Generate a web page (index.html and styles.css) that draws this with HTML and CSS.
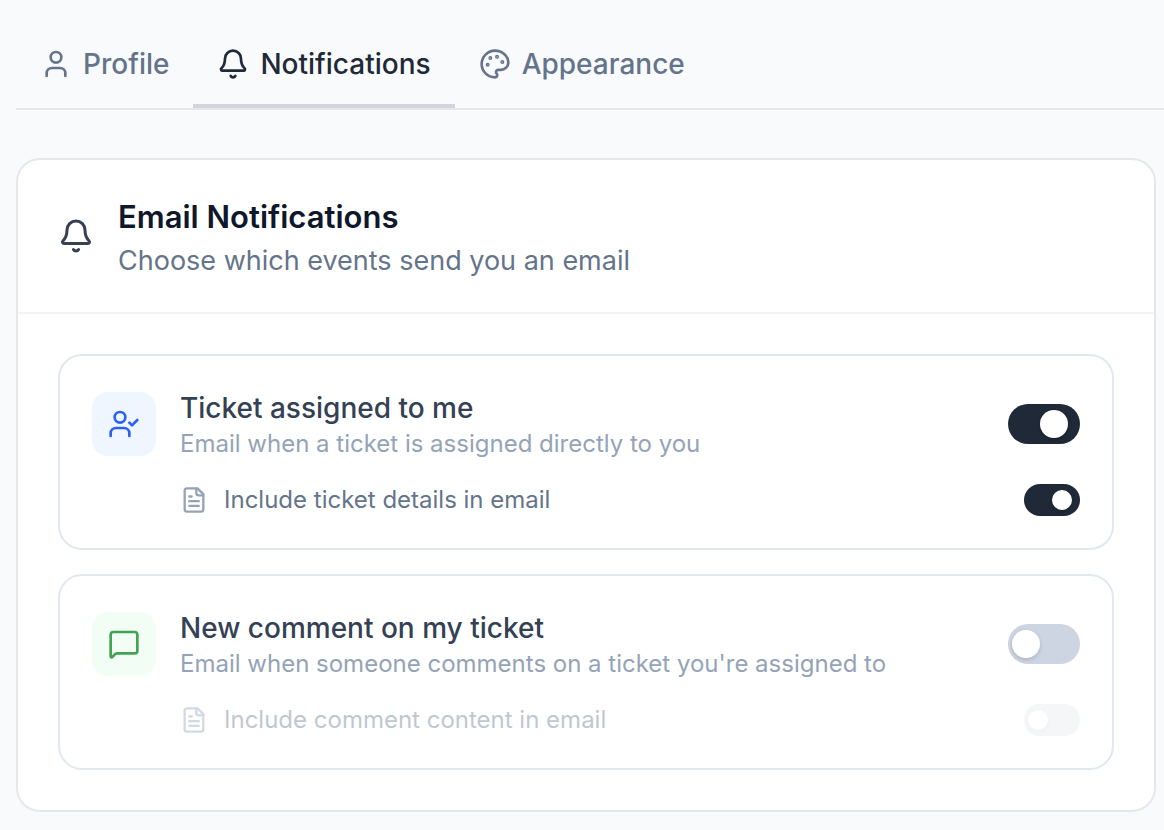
FILE: index.html
```html
<!DOCTYPE html>
<html lang="en">
<head>
  <meta charset="UTF-8">
  <meta name="viewport" content="width=device-width, initial-scale=1.0">
  <title>Notification Settings</title>
  <link rel="stylesheet" href="styles.css">
</head>
<body>

<nav class="tabs">
  <button type="button" class="tab">
    <svg class="icon" viewBox="0 0 24 24"><path d="M19 21v-2a4 4 0 0 0-4-4H9a4 4 0 0 0-4 4v2"/><circle cx="12" cy="7" r="4"/></svg>
    Profile
  </button>
  <button type="button" class="tab active">
    <svg class="icon" viewBox="0 0 24 24"><path d="M10.268 21a2 2 0 0 0 3.464 0"/><path d="M3.262 15.326A1 1 0 0 0 4 17h16a1 1 0 0 0 .74-1.673C19.41 13.956 18 12.499 18 8A6 6 0 0 0 6 8c0 4.499-1.411 5.956-2.738 7.326"/></svg>
    Notifications
  </button>
  <button type="button" class="tab">
    <svg class="icon" viewBox="0 0 24 24"><path d="M12 2C6.5 2 2 6.5 2 12s4.5 10 10 10c.926 0 1.648-.746 1.648-1.688 0-.437-.18-.835-.437-1.125-.29-.289-.438-.652-.438-1.125a1.64 1.64 0 0 1 1.668-1.668h1.996c3.051 0 5.555-2.503 5.555-5.554C21.965 6.012 17.461 2 12 2z"/><circle class="dot" cx="13.5" cy="6.5" r=".5"/><circle class="dot" cx="17.5" cy="10.5" r=".5"/><circle class="dot" cx="6.5" cy="12.5" r=".5"/><circle class="dot" cx="8.5" cy="7.5" r=".5"/></svg>
    Appearance
  </button>
</nav>

<section class="card">
  <header class="card-header">
    <svg class="icon icon-lg" viewBox="0 0 24 24"><path d="M10.268 21a2 2 0 0 0 3.464 0"/><path d="M3.262 15.326A1 1 0 0 0 4 17h16a1 1 0 0 0 .74-1.673C19.41 13.956 18 12.499 18 8A6 6 0 0 0 6 8c0 4.499-1.411 5.956-2.738 7.326"/></svg>
    <div>
      <h2>Email Notifications</h2>
      <p>Choose which events send you an email</p>
    </div>
  </header>

  <form class="card-body">
    <div class="setting">
      <div class="setting-row">
        <span class="badge badge-blue">
          <svg class="icon" viewBox="0 0 24 24"><path d="m16 11 2 2 4-4"/><path d="M16 21v-2a4 4 0 0 0-4-4H6a4 4 0 0 0-4 4v2"/><circle cx="9" cy="7" r="4"/></svg>
        </span>
        <div class="setting-text">
          <label for="assigned">Ticket assigned to me</label>
          <p>Email when a ticket is assigned directly to you</p>
        </div>
        <input type="checkbox" role="switch" class="toggle" id="assigned" checked>
      </div>
      <div class="sub-row">
        <svg class="icon icon-sm" viewBox="0 0 24 24"><path d="M15 2H6a2 2 0 0 0-2 2v16a2 2 0 0 0 2 2h12a2 2 0 0 0 2-2V7Z"/><path d="M14 2v4a2 2 0 0 0 2 2h4"/><path d="M10 9H8"/><path d="M16 13H8"/><path d="M16 17H8"/></svg>
        <label for="assignedDetails">Include ticket details in email</label>
        <input type="checkbox" role="switch" class="toggle toggle-sm" id="assignedDetails" checked>
      </div>
    </div>

    <div class="setting">
      <div class="setting-row">
        <span class="badge badge-green">
          <svg class="icon" viewBox="0 0 24 24"><path d="M22 17a2 2 0 0 1-2 2H6.828a2 2 0 0 0-1.414.586l-2.202 2.202A.71.71 0 0 1 2 21.286V5a2 2 0 0 1 2-2h16a2 2 0 0 1 2 2z"/></svg>
        </span>
        <div class="setting-text">
          <label for="comment">New comment on my ticket</label>
          <p>Email when someone comments on a ticket you're assigned to</p>
        </div>
        <input type="checkbox" role="switch" class="toggle" id="comment">
      </div>
      <div class="sub-row disabled">
        <svg class="icon icon-sm" viewBox="0 0 24 24"><path d="M15 2H6a2 2 0 0 0-2 2v16a2 2 0 0 0 2 2h12a2 2 0 0 0 2-2V7Z"/><path d="M14 2v4a2 2 0 0 0 2 2h4"/><path d="M10 9H8"/><path d="M16 13H8"/><path d="M16 17H8"/></svg>
        <label for="commentContent">Include comment content in email</label>
        <input type="checkbox" role="switch" class="toggle toggle-sm" id="commentContent" disabled>
      </div>
    </div>
  </form>
</section>

</body>
</html>
```

FILE: styles.css
```css
* { box-sizing: border-box; }
body {
  margin: 0;
  padding: 20px 8px 18px 16px;
  background: #f9fafc;
  color: #1f2937;
  font-family: Inter, sans-serif;
}
h2, p { margin: 0; }

.icon {
  width: 32px;
  height: 32px;
  flex: none;
  fill: none;
  stroke: currentColor;
  stroke-width: 2;
  stroke-linecap: round;
  stroke-linejoin: round;
}
.icon-lg { width: 36px; height: 36px; color: #374151; }
.icon-sm { width: 28px; height: 28px; color: #94a3b8; }
.dot { fill: currentColor; }

/* tabs */
.tabs {
  display: flex;
  margin-right: -8px;
  border-bottom: 2px solid #e5e7eb;
}
.tab {
  display: flex;
  align-items: center;
  gap: 11px;
  padding: 24px 24px 20px;
  border: none;
  border-bottom: 4px solid transparent;
  background: none;
  color: #64748b;
  font: 500 28px/40px Inter, sans-serif;
  cursor: pointer;
}
.tab.active { color: #1f2937; border-bottom-color: #d4d4dc; }

/* card */
.card {
  margin-top: 48px;
  background: #fff;
  border: 2px solid #e5e7eb;
  border-radius: 24px;
}
.card-header {
  display: flex;
  align-items: center;
  gap: 24px;
  padding: 32px 40px;
  border-bottom: 2px solid #f3f4f6;
}
.card-header h2 { color: #0f172a; font-size: 31px; font-weight: 600; line-height: 50px; }
.card-header p { color: #64748b; font-size: 27px; line-height: 38px; }
.card-body {
  display: flex;
  flex-direction: column;
  gap: 24px;
  padding: 40px;
}

/* settings */
.setting {
  padding: 32px;
  border: 2px solid #e2e8f0;
  border-radius: 24px;
}
.setting-row { display: flex; align-items: center; gap: 24px; }
.setting-text { flex: 1; }
.setting-text label { display: block; color: #334155; font-size: 28px; font-weight: 500; line-height: 40px; }
.setting-text p { color: #94a3b8; font-size: 24px; line-height: 32px; }
.badge {
  display: flex;
  align-items: center;
  justify-content: center;
  width: 64px;
  height: 64px;
  border-radius: 16px;
}
.badge-blue { background: #eff6ff; color: #2b5ff5; }
.badge-green { background: #f2fdf5; color: #41a451; }
.sub-row {
  display: flex;
  align-items: center;
  gap: 16px;
  margin-top: 24px;
  padding-left: 88px;
}
.sub-row label { flex: 1; color: #64748b; font-size: 24px; line-height: 32px; }
.sub-row.disabled { opacity: 0.4; }

/* toggles */
.toggle {
  appearance: none;
  display: flex;
  align-items: center;
  flex: none;
  width: 72px;
  height: 40px;
  margin: 0;
  padding: 0 4px;
  border-radius: 20px;
  background: #cdd4e2;
  cursor: pointer;
}
.toggle::before {
  content: "";
  width: 28px;
  height: 28px;
  border-radius: 50%;
  background: #fff;
  box-shadow: 0 2px 4px rgba(0, 0, 0, 0.15);
}
.toggle:checked { justify-content: flex-end; padding-right: 12px; background: #1f2937; }
.toggle-sm { width: 56px; height: 32px; }
.toggle-sm::before { width: 20px; height: 20px; }
.toggle-sm:checked { padding-right: 8px; }
.toggle:disabled { background: #e5e9ef; cursor: default; }
.toggle:disabled::before { box-shadow: 0 2px 4px rgba(0, 0, 0, 0.04); }
```
